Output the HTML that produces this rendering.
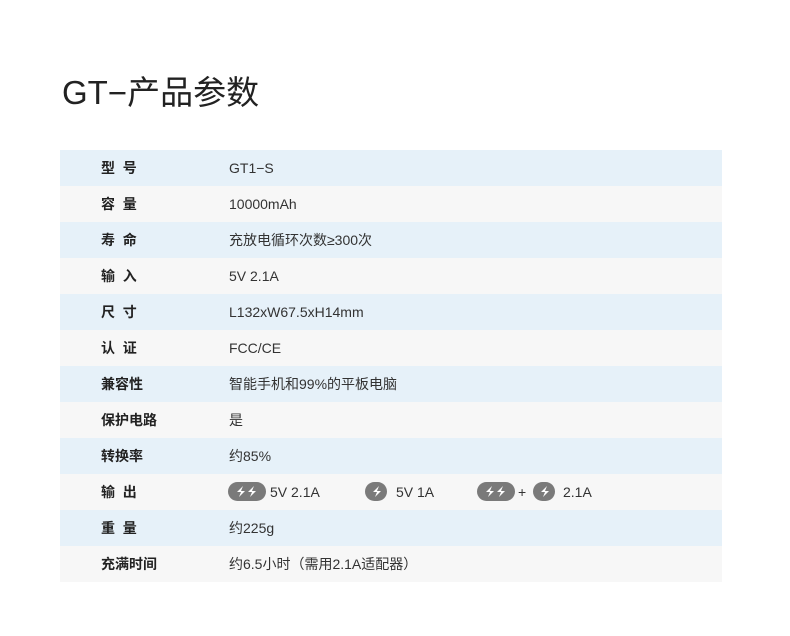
<!DOCTYPE html>
<html><head><meta charset="utf-8"><style>
body{margin:0;background:#fff;width:790px;height:636px;overflow:hidden;font-family:"Liberation Sans","Noto Sans CJK SC",sans-serif;}
h1{position:absolute;left:62px;top:73px;margin:0;font-weight:normal;font-size:33px;line-height:40px;color:#222;}
.t{position:absolute;left:60px;top:150px;width:662px;}
.r{height:36px;position:relative;font-size:14px;line-height:18px;color:#333;}
.r:nth-child(odd){background:#e6f1f9}
.r:nth-child(even){background:#f7f7f7}
.l{position:absolute;left:41px;top:9px;font-weight:bold;color:#222;}
.v{position:absolute;left:169px;top:9px;}
.b{position:absolute;top:8px;height:19px;background:#7a7a7a;border-radius:10px;}
.b svg{display:block}
.x{position:absolute;top:9px}
</style></head><body>
<h1>GT−产品参数</h1>
<div class="t">
<div class="r"><span class="l">型&nbsp;&nbsp;号</span><span class="v">GT1−S</span></div>
<div class="r"><span class="l">容&nbsp;&nbsp;量</span><span class="v">10000mAh</span></div>
<div class="r"><span class="l">寿&nbsp;&nbsp;命</span><span class="v">充放电循环次数≥300次</span></div>
<div class="r"><span class="l">输&nbsp;&nbsp;入</span><span class="v">5V 2.1A</span></div>
<div class="r"><span class="l">尺&nbsp;&nbsp;寸</span><span class="v">L132xW67.5xH14mm</span></div>
<div class="r"><span class="l">认&nbsp;&nbsp;证</span><span class="v">FCC/CE</span></div>
<div class="r"><span class="l">兼容性</span><span class="v">智能手机和99%的平板电脑</span></div>
<div class="r"><span class="l">保护电路</span><span class="v">是</span></div>
<div class="r"><span class="l">转换率</span><span class="v">约85%</span></div>
<div class="r"><span class="l">输&nbsp;&nbsp;出</span>
<div class="b" style="left:168px;width:38px"><svg width="38" height="19"><path d="M15 4l-6 6h4l-2 5 6-6h-4z M26 4l-6 6h4l-2 5 6-6h-4z" fill="#fff"/></svg></div>
<span class="x" style="left:210px">5V 2.1A</span>
<div class="b" style="left:305px;width:22px"><svg width="22" height="19"><path d="M14 4l-6 6h4l-2 5 6-6h-4z" fill="#fff"/></svg></div>
<span class="x" style="left:336px">5V 1A</span>
<div class="b" style="left:417px;width:38px"><svg width="38" height="19"><path d="M15 4l-6 6h4l-2 5 6-6h-4z M26 4l-6 6h4l-2 5 6-6h-4z" fill="#fff"/></svg></div>
<span class="x" style="left:458px">+</span>
<div class="b" style="left:473px;width:22px"><svg width="22" height="19"><path d="M14 4l-6 6h4l-2 5 6-6h-4z" fill="#fff"/></svg></div>
<span class="x" style="left:503px">2.1A</span>
</div>
<div class="r"><span class="l">重&nbsp;&nbsp;量</span><span class="v">约225g</span></div>
<div class="r"><span class="l">充满时间</span><span class="v">约6.5小时（需用2.1A适配器）</span></div>
</div>
</body></html>
